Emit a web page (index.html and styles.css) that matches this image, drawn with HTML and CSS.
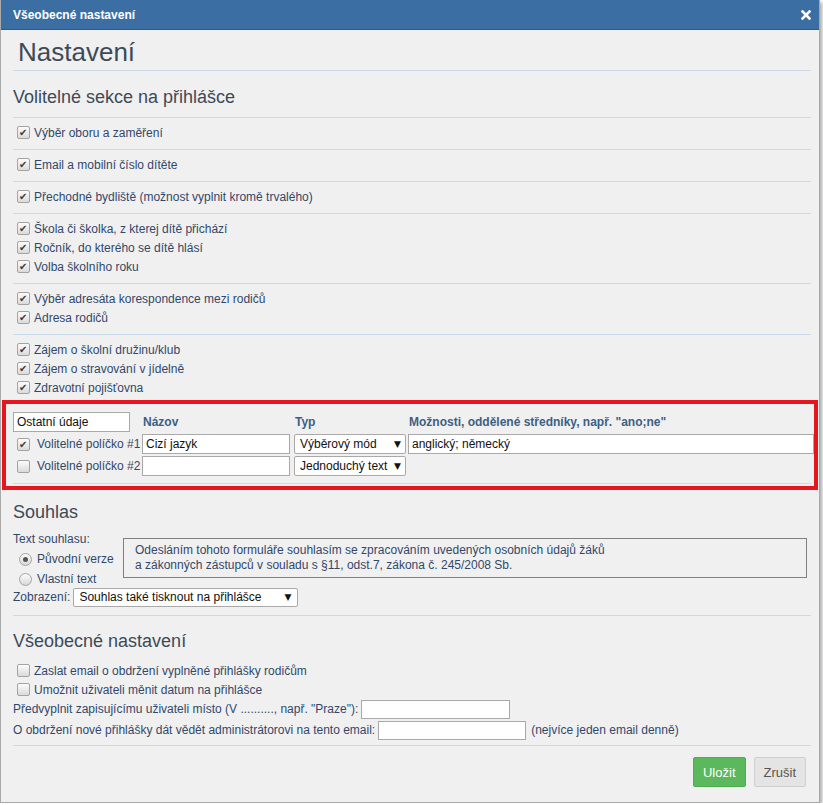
FILE: index.html
```html
<!DOCTYPE html>
<html lang="cs">
<head>
    <meta charset="UTF-8">
    <title>Všeobecné nastavení</title>
    <link rel="stylesheet" href="styles.css">
</head>
<body>
    <div class="dialog">
        <div class="dialog-title">
            <span>Všeobecné nastavení</span>
            <svg class="close" width="10" height="10" viewBox="0 0 10 10"><path d="M1.5 1.5 L8.5 8.5 M8.5 1.5 L1.5 8.5" stroke="#fff" stroke-width="2.6" stroke-linecap="square"/></svg>
        </div>

        <div class="dialog-body">
            <h1 class="page-title">Nastavení</h1>
            <h2 class="section-title">Volitelné sekce na přihlášce</h2>

            <!-- Optional sections -->
            <div class="group">
                <label class="check"><span class="cb on"></span>Výběr oboru a zaměření</label>
            </div>
            <div class="group">
                <label class="check"><span class="cb on"></span>Email a mobilní číslo dítěte</label>
            </div>
            <div class="group">
                <label class="check"><span class="cb on"></span>Přechodné bydliště (možnost vyplnit kromě trvalého)</label>
            </div>
            <div class="group">
                <label class="check"><span class="cb on"></span>Škola či školka, z kterej dítě přichází</label>
                <label class="check"><span class="cb on"></span>Ročník, do kterého se dítě hlásí</label>
                <label class="check"><span class="cb on"></span>Volba školního roku</label>
            </div>
            <div class="group">
                <label class="check"><span class="cb on"></span>Výběr adresáta korespondence mezi rodičů</label>
                <label class="check"><span class="cb on"></span>Adresa rodičů</label>
            </div>
            <div class="group last">
                <label class="check"><span class="cb on"></span>Zájem o školní družinu/klub</label>
                <label class="check"><span class="cb on"></span>Zájem o stravování v jídelně</label>
                <label class="check"><span class="cb on"></span>Zdravotní pojišťovna</label>
            </div>

            <!-- Custom fields -->
            <div class="custom-fields">
                <div class="fields-grid">
                    <div class="input small">Ostatní údaje</div>
                    <div class="col-head">Názov</div>
                    <div class="col-head">Typ</div>
                    <div class="col-head">Možnosti, oddělené středníky, např. "ano;ne"</div>

                    <label class="check field-label"><span class="cb on"></span>Volitelné políčko #1</label>
                    <div class="input name">Cizí jazyk</div>
                    <div class="select type"><span>Výběrový mód</span><span class="arrow">▼</span></div>
                    <div class="input options">anglický; německý</div>

                    <label class="check field-label"><span class="cb"></span>Volitelné políčko #2</label>
                    <div class="input name"></div>
                    <div class="select type"><span>Jednoduchý text</span><span class="arrow">▼</span></div>
                    <div></div>
                </div>
                <div class="rule"></div>
            </div>

            <!-- Consent -->
            <h2 class="section-title plain">Souhlas</h2>
            <div class="consent">
                <div class="consent-options">
                    <div class="row">Text souhlasu:</div>
                    <label class="radio-row"><span class="radio on"></span>Původní verze</label>
                    <label class="radio-row"><span class="radio"></span>Vlastní text</label>
                </div>
                <div class="consent-text">
                    Odesláním tohoto formuláře souhlasím se zpracováním uvedených osobních údajů žáků<br>
                    a zákonných zástupců v souladu s §11, odst.7, zákona č. 245/2008 Sb.
                </div>
            </div>
            <div class="row display-row">
                Zobrazení:
                <div class="select display"><span>Souhlas také tisknout na přihlášce</span><span class="arrow">▼</span></div>
            </div>
            <div class="rule consent-rule"></div>

            <!-- General -->
            <h2 class="section-title general">Všeobecné nastavení</h2>
            <div class="general-list">
                <label class="check"><span class="cb"></span>Zaslat email o obdržení vyplněné přihlášky rodičům</label>
                <label class="check"><span class="cb"></span>Umožnit uživateli měnit datum na přihlášce</label>
                <div class="row input-row">Předvyplnit zapisujícímu uživateli místo (V .........., např. "Praze"):<div class="input place"></div></div>
                <div class="row input-row second">O obdržení nové přihlášky dát vědět administrátorovi na tento email:<div class="input email"></div>(nejvíce jeden email denně)</div>
            </div>
        </div>

        <div class="dialog-footer">
            <button class="btn btn-save">Uložit</button>
            <button class="btn btn-cancel">Zrušit</button>
        </div>
    </div>
</body>
</html>
```

FILE: styles.css
```css
body {
    margin: 0;
    padding: 0;
    background: #ffffff;
    font-family: 'Liberation Sans', Arial, sans-serif;
    font-size: 12px;
    color: #32486a;
}
.dialog {
    width: 818px;
    background: #f0f0f0;
    border: 1px solid #a9a9a9;
    border-top: none;
    box-shadow: 2px 2px 4px rgba(0,0,0,0.35);
}
.dialog-title {
    height: 30px;
    background: #3b6ea3;
    border-bottom: 1px solid #2e5a88;
    box-sizing: border-box;
    display: flex;
    align-items: center;
    justify-content: space-between;
    padding: 0 8px 0 12px;
    color: #fff;
    font-weight: bold;
    font-size: 12px;
}
.close {
    display: block;
}
.dialog-body {
    padding: 0 8px 0 12px;
}
.page-title {
    margin: 0;
    padding: 4px 0 0 5px;
    height: 36px;
    line-height: 36px;
    font-size: 26px;
    font-weight: normal;
    color: #3d4a58;
    border-bottom: 1px solid #c9dbea;
}
.section-title {
    margin: 0;
    padding-top: 8px;
    height: 38px;
    line-height: 36px;
    font-size: 18px;
    font-weight: normal;
    color: #3d4a58;
    border-bottom: 1px solid #c9dbea;
}
.section-title.plain {
    border: none;
    height: 24px;
    line-height: 24px;
    padding-top: 10px;
}
.section-title.general {
    border: none;
    height: 24px;
    line-height: 24px;
    padding-top: 13px;
}
.group {
    padding: 5px 0 7px;
    border-bottom: 1px solid #c9dbea;
    display: flex;
    flex-direction: column;
}
.group.last {
    border: none;
    padding-bottom: 3px;
}
.check {
    display: flex;
    align-items: center;
    height: 19px;
    padding-left: 4px;
}
.cb {
    width: 11px;
    height: 11px;
    border: 1px solid #a3a3a3;
    border-radius: 2px;
    background: linear-gradient(#fcfcfc, #dadada);
    margin-right: 4px;
    position: relative;
    flex: none;
}
.cb.on::after {
    content: "✔";
    position: absolute;
    left: 1px;
    top: -1px;
    font-family: 'DejaVu Sans', sans-serif;
    font-size: 10px;
    line-height: 13px;
    color: #3a3a3a;
}
.custom-fields {
    margin: 0 -7px 0 -11px;
    border: 4px solid #e5161d;
    padding: 8px 0 2px 7px;
}
.fields-grid {
    display: grid;
    grid-template-columns: 129px 152px 114px 1fr;
    grid-auto-rows: 20px;
    row-gap: 2px;
    align-items: center;
}
.input {
    height: 20px;
    box-sizing: border-box;
    background: #fff;
    border: 1px solid #a9a9a9;
    padding: 0 3px;
    line-height: 18px;
    color: #111;
    font-size: 12px;
}
.input.small {
    width: 117px;
}
.input.name {
    width: 148px;
}
.col-head {
    font-weight: bold;
    color: #3c5f84;
    padding-left: 1px;
}
.field-label {
    padding-left: 4px;
}
.field-label .cb {
    margin-right: 7px;
}
.select {
    height: 20px;
    box-sizing: border-box;
    background: #fff;
    border: 1px solid #a9a9a9;
    border-radius: 2px;
    display: flex;
    align-items: center;
    justify-content: space-between;
    padding: 0 4px 0 5px;
    color: #111;
}
.select .arrow {
    font-size: 9px;
    font-family: 'DejaVu Sans', sans-serif;
}
.select.type {
    width: 112px;
}
.rule {
    height: 1px;
    background: #c9dbea;
    margin: 7px 3px 0 0;
}
.row {
    height: 20px;
    display: flex;
    align-items: center;
}
.consent {
    display: flex;
    margin-top: 5px;
}
.consent-options {
    width: 110px;
    display: flex;
    flex-direction: column;
}
.radio-row {
    display: flex;
    align-items: center;
    height: 20px;
    padding-left: 6px;
}
.radio {
    width: 11px;
    height: 11px;
    border: 1px solid #a3a3a3;
    border-radius: 50%;
    background: linear-gradient(#fcfcfc, #d8d8d8);
    margin-right: 5px;
    position: relative;
}
.radio.on::after {
    content: "";
    position: absolute;
    left: 3px;
    top: 3px;
    width: 5px;
    height: 5px;
    border-radius: 50%;
    background: #555;
}
.consent-text {
    margin-top: 9px;
    height: 40px;
    width: 684px;
    box-sizing: border-box;
    border: 1px solid #808080;
    padding: 4px 0 0 11px;
    line-height: 15px;
}
.display-row {
    margin-top: -2px;
}
.select.display {
    width: 225px;
    height: 19px;
    margin-left: 3px;
    padding-right: 6px;
}
.consent-rule {
    margin: 8px 0 0 0;
}
.general-list {
    margin-top: 8px;
    padding-bottom: 5px;
    border-bottom: 1px solid #c9dbea;
}
.input-row .input {
    margin-left: 3px;
}
.input-row.second {
    margin-top: 1px;
}
.input.place {
    width: 149px;
    height: 19px;
}
.input.email {
    width: 148px;
    height: 19px;
    margin-right: 5px;
}
.dialog-footer {
    display: flex;
    justify-content: flex-end;
    gap: 8px;
    padding: 11px 13px 15px 0;
}
.btn {
    height: 30px;
    padding: 0 9px;
    font-family: 'Liberation Sans', Arial, sans-serif;
    font-size: 13px;
    border-radius: 2px;
    cursor: pointer;
}
.btn-save {
    background: #5cb85c;
    border: 1px solid #4cae4c;
    color: #fff;
}
.btn-cancel {
    background: #e4e4e4;
    border: 1px solid #cfcfcf;
    color: #555;
}
```
